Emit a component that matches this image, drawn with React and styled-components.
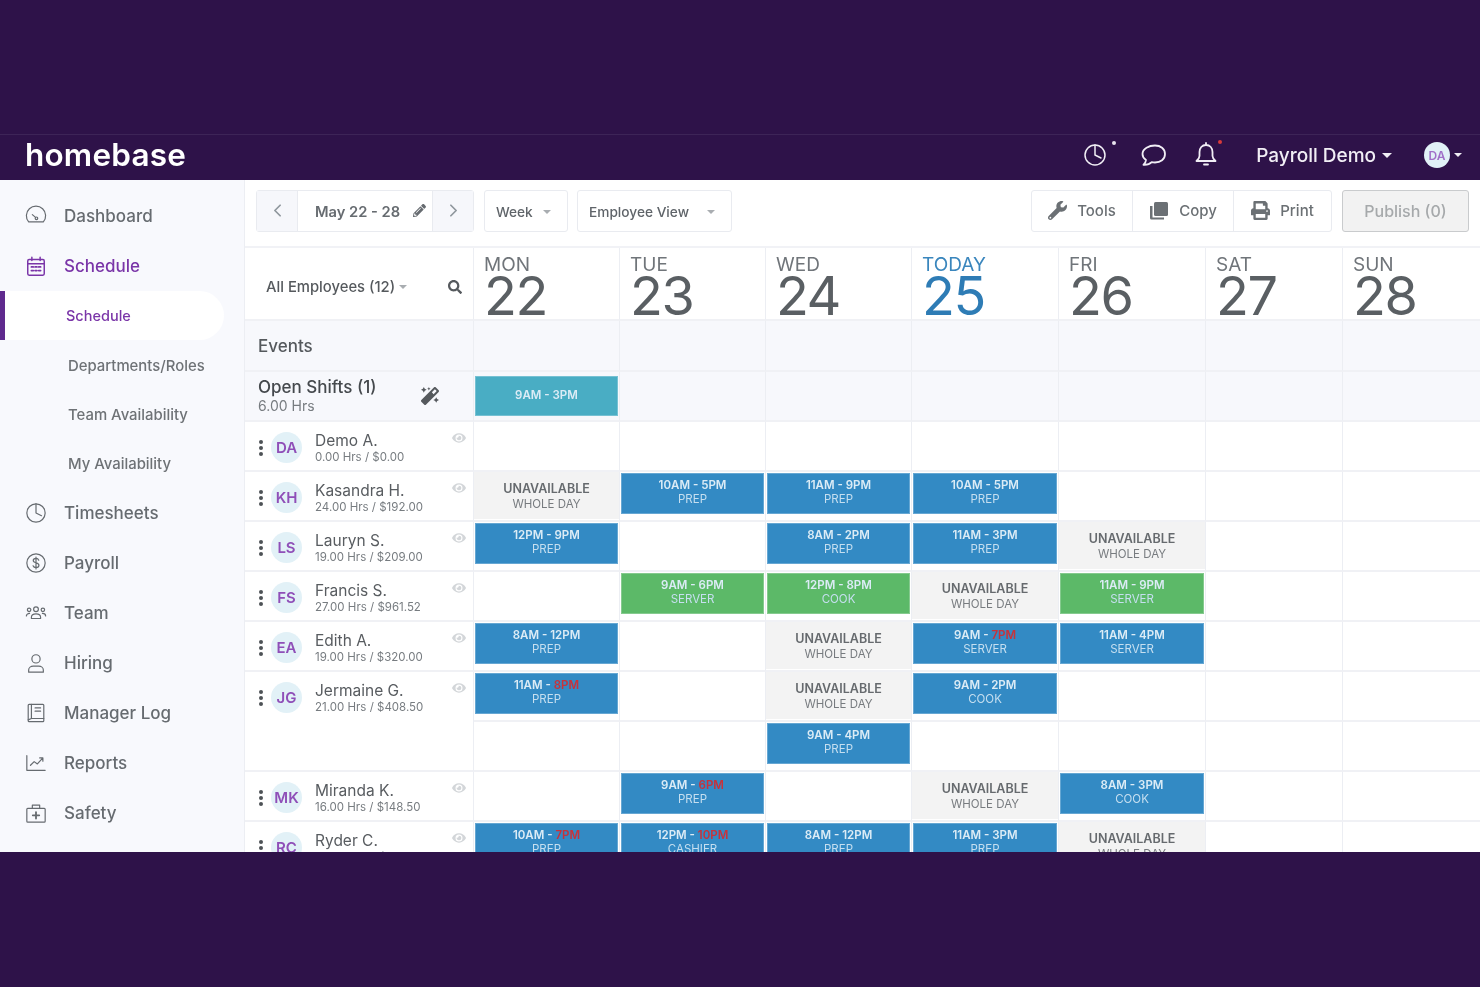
import React from "react";
import styled, { createGlobalStyle } from "styled-components";
import { FaWrench, FaPencilAlt, FaSearch, FaPrint, FaMagic, FaEye } from "react-icons/fa";
import { FiChevronLeft, FiChevronRight } from "react-icons/fi";

const GlobalStyle = createGlobalStyle`
  html, body { margin: 0; padding: 0; background: #2e1249; }
  * { box-sizing: border-box; }
  body { font-family: Inter, "Noto Sans", "Liberation Sans", sans-serif; color: #4d5256; }
`;

const COLUMNS = "229px 146px 146px 146px 147px 147px 137px 138px";

const Page = styled.div`
  width: 1480px;
  height: 987px;
  padding-top: 134px;
  background: #2e1249;
  overflow: hidden;
`;

const Frame = styled.div`
  height: 718px;
  display: flex;
  flex-direction: column;
  background: #fff;
  overflow: hidden;
  filter: blur(0.35px);
`;

const Header = styled.header`
  height: 46px;
  flex: none;
  display: flex;
  align-items: center;
  padding: 0 0 5px 25px;
  background: #2e1249;
  border-top: 1px solid #3d2457;
  color: #fff;
`;

const Logo = styled.div`
  flex: 1;
  font-size: 31.5px;
  font-weight: 600;
  letter-spacing: 0.2px;
  line-height: 40px;
`;

const HeaderIcon = styled.div`
  position: relative;
  display: flex;
  color: #f1eef5;
  margin-right: ${({ $gap }) => $gap}px;
`;

const Dot = styled.span`
  position: absolute;
  top: -2px;
  right: ${({ $right }) => $right}px;
  width: 4px;
  height: 4px;
  border-radius: 50%;
  background: ${({ $color }) => $color};
`;

const HeaderUser = styled.div`
  display: flex;
  align-items: center;
  font-size: 19px;
  font-weight: 500;
  color: #f1eef5;
  margin-right: 32px;
`;

const Caret = styled.span`
  display: inline-block;
  width: 0;
  height: 0;
  margin-left: ${({ $left }) => $left ?? 6}px;
  border-left: ${({ $size }) => $size ?? 4}px solid transparent;
  border-right: ${({ $size }) => $size ?? 4}px solid transparent;
  border-top: ${({ $size }) => $size ?? 4}px solid ${({ $color }) => $color ?? "currentColor"};
`;

const HeaderAvatar = styled.div`
  width: 26px;
  height: 26px;
  border-radius: 50%;
  display: flex;
  align-items: center;
  justify-content: center;
  background: #e1f1f7;
  color: #a070c8;
  font-size: 12px;
  font-weight: 600;
`;

const HeaderEnd = styled.div`
  display: flex;
  align-items: center;
  margin-right: 18px;
  color: #f1eef5;
`;

const Body = styled.div`
  flex: 1;
  display: flex;
  min-height: 0;
`;

const Sidebar = styled.nav`
  width: 245px;
  flex: none;
  background: #f8f9fd;
  border-right: 1px solid #eceef3;
  padding-top: 11px;
`;

const NavItem = styled.div`
  height: 50px;
  display: flex;
  align-items: center;
  gap: 17px;
  padding-left: 25px;
  font-size: 17px;
  font-weight: 500;
  color: ${({ $active }) => ($active ? "#7a35a8" : "#666b70")};
  svg { flex: none; }
`;

const SubItem = styled.div`
  height: 49.25px;
  display: flex;
  align-items: center;
  width: 224px;
  padding-left: ${({ $active }) => ($active ? 61 : 68)}px;
  padding-top: ${({ $active }) => ($active ? 0 : 2)}px;
  font-size: ${({ $active }) => ($active ? 14.5 : 14.9)}px;
  font-weight: 500;
  color: ${({ $active }) => ($active ? "#7a35a8" : "#6e7276")};
  ${({ $active }) =>
    $active &&
    `background: #fff;
     border-left: 5px solid #5f2a8e;
     border-radius: 0 25px 25px 0;`}
`;

const Main = styled.main`
  flex: 1;
  min-width: 0;
  display: flex;
  flex-direction: column;
  overflow: hidden;
`;

const Toolbar = styled.div`
  height: 68px;
  flex: none;
  display: flex;
  align-items: center;
  padding: 0 11px 5px 11px;
  border-bottom: 2px solid #f1f2f6;
  font-size: 14px;
  font-weight: 500;
  color: #6b7074;
`;

const Group = styled.div`
  display: flex;
  height: 42px;
  border: 1px solid #e9ebf0;
  border-radius: 3px;
  background: #fff;
  margin-right: ${({ $gap }) => $gap ?? 0}px;
`;

const ArrowButton = styled.div`
  width: 41px;
  display: flex;
  align-items: center;
  justify-content: center;
  background: #f6f7fb;
  color: #8f979d;
  ${({ $end }) => ($end ? "border-left: 1px solid #e9ebf0;" : "border-right: 1px solid #e9ebf0;")}
`;

const DateLabel = styled.div`
  width: 134px;
  display: flex;
  align-items: center;
  padding: 2px 0 0 17px;
  font-size: 14.7px;
  font-weight: 600;
  gap: 13px;
  color: #666b70;
  svg { color: #666b70; margin-top: -3px; }
`;

const Select = styled.div`
  display: flex;
  align-items: center;
  width: ${({ $width }) => $width}px;
  padding: 2px 16px 0 11px;
  font-size: 13.7px;
  color: #5f6469;
  justify-content: space-between;
`;

const Spacer = styled.div`
  flex: 1;
`;

const ToolButton = styled.div`
  width: ${({ $width }) => $width}px;
  display: flex;
  align-items: center;
  justify-content: center;
  gap: 10px;
  font-size: 15px;
  color: #6b7074;
  & + & { border-left: 1px solid #e9ebf0; }
`;

const PublishButton = styled.div`
  width: 127px;
  height: 42px;
  display: flex;
  align-items: center;
  justify-content: center;
  background: #f2f2f2;
  border: 1px solid #c9cbcd;
  border-radius: 3px;
  color: #a6a9ab;
  font-size: 16px;
`;

const Row = styled.div`
  display: grid;
  grid-template-columns: ${COLUMNS};
  grid-auto-rows: ${({ $height }) => $height ?? 50}px;
  flex: none;
  background: ${({ $tint }) => ($tint ? "#f7f8fc" : "#fff")};
`;

const Cell = styled.div`
  border-right: 1px solid #eceef3;
  border-bottom: 2px solid #f0f1f5;
  padding: ${({ $inset }) => $inset ?? 1}px 1px 0;
  min-width: 0;
`;

const DayCell = styled(Cell)`
  padding: 7px 0 0 10px;
  position: relative;
  color: ${({ $today }) => ($today ? "#2e7cb5" : "#5a5f63")};
`;

const DayName = styled.div`
  font-size: 19px;
  line-height: 20px;
  color: ${({ $today }) => ($today ? "#3a86bd" : "#70757a")};
`;

const DayNumber = styled.div`
  font-size: 54px;
  line-height: 42px;
  letter-spacing: -1.5px;
`;

const FilterCell = styled(Cell)`
  display: flex;
  align-items: center;
  padding: 6px 11px 0 21px;
  font-size: 14.8px;
  font-weight: 500;
  color: #55595d;
  svg { color: #55595d; }
`;

const SectionCell = styled(Cell)`
  display: flex;
  align-items: center;
  padding: 0 13px;
  font-size: 17px;
  font-weight: 500;
  color: #55595d;
`;

const OpenCell = styled(Cell)`
  display: flex;
  align-items: center;
  justify-content: space-between;
  padding: 0 34px 1px 13px;
  svg { color: #55595d; }
`;

const OpenTitle = styled.div`
  font-size: 17px;
  line-height: 19px;
  font-weight: 500;
  color: #45494d;
`;

const OpenHours = styled.div`
  font-size: 14px;
  line-height: 17px;
  color: #777c80;
`;

const StaffCell = styled(Cell)`
  grid-row: span ${({ $span }) => $span ?? 1};
  position: relative;
  display: flex;
  align-items: flex-start;
  padding: 9px 0 0 14px;
`;

const Kebab = styled.div`
  display: flex;
  flex-direction: column;
  gap: 2px;
  margin: 9px 8px 0 0;
  span {
    width: 4px;
    height: 4px;
    border-radius: 50%;
    background: #4d5256;
  }
`;

const Avatar = styled.div`
  width: 31px;
  height: 31px;
  flex: none;
  margin: 1px 13px 0 0;
  border-radius: 50%;
  display: flex;
  align-items: center;
  justify-content: center;
  background: #e2f1f7;
  color: #8f4fb8;
  font-size: 15px;
  font-weight: 600;
`;

const StaffName = styled.div`
  font-size: 15.5px;
  line-height: 20px;
  color: #585c60;
`;

const StaffHours = styled.div`
  font-size: 11.5px;
  line-height: 15px;
  margin-top: -1px;
  color: #777c80;
`;

const EyeMark = styled.div`
  position: absolute;
  top: 9px;
  right: 7px;
  display: flex;
  color: #d3d6d9;
`;

const Shift = styled.div`
  height: ${({ $short }) => ($short ? 40 : 41)}px;
  display: flex;
  flex-direction: column;
  align-items: center;
  justify-content: center;
  background: ${({ $tone }) => ({ blue: "#338ac4", green: "#5cb968", teal: "#49adc4" })[$tone]};
  border: 1px solid rgba(255, 255, 255, 0.25);
  color: #fff;
  padding-bottom: ${({ $short }) => ($short ? 2 : 4)}px;
`;

const ShiftTime = styled.div`
  font-size: 11.5px;
  line-height: 15px;
  font-weight: 600;
  color: #dcecf6;
  b { color: #c8323a; font-weight: 600; }
`;

const ShiftRole = styled.div`
  font-size: 11.5px;
  line-height: 13px;
  color: #c6dff0;
`;

const Unavailable = styled.div`
  height: 47px;
  display: flex;
  flex-direction: column;
  align-items: center;
  justify-content: center;
  background: #f3f3f3;
  margin: -1px -1px 0;
`;

const UnavailableTitle = styled.div`
  font-size: 12.5px;
  line-height: 16px;
  font-weight: 600;
  color: #666a6e;
`;

const UnavailableSub = styled.div`
  font-size: 11.5px;
  line-height: 14px;
  color: #777b7f;
`;

const stroke = { fill: "none", stroke: "currentColor", strokeWidth: 1.3, strokeLinecap: "round", strokeLinejoin: "round" };

const navIcons = {
  gauge: (
    <g {...stroke}>
      <path d="M4 18.5a10.5 10.5 0 1 1 16 0z" />
      <circle cx="12.5" cy="14.5" r="1.4" />
      <path d="M11.5 13.5 8 10.5" />
    </g>
  ),
  calendar: (
    <g {...stroke} strokeWidth="1.6">
      <rect x="3" y="5" width="18" height="17" rx="1.5" />
      <path d="M3 9.5h18M7.5 2.5V6M16.5 2.5V6" />
      <path strokeWidth="2" d="M7 13h2M11 13h2M15 13h2M7 17h2M11 17h2M15 17h2" />
    </g>
  ),
  clock: (
    <g {...stroke}>
      <circle cx="12" cy="12" r="10" />
      <path d="M12 2v10l6 3" />
    </g>
  ),
  dollar: (
    <g {...stroke}>
      <circle cx="12" cy="12" r="10" />
      <path d="M15 9c-.5-1.3-1.6-2-3-2-1.7 0-3 .9-3 2.4 0 3.2 6.2 1.8 6.2 5 0 1.5-1.4 2.6-3.2 2.6-1.5 0-2.7-.7-3.2-2M12 5.5v13" />
    </g>
  ),
  team: (
    <g {...stroke}>
      <circle cx="12" cy="8" r="2.6" />
      <circle cx="4.5" cy="8.5" r="1.9" />
      <circle cx="19.5" cy="8.5" r="1.9" />
      <path d="M7 18v-1.500c0-2 2-3.500 5-3.500s5 1.500 5 3.500V18zM5 12.500c-2 0-3.500 1-3.500 2.800M19 12.500c2 0 3.500 1 3.500 2.800" />
    </g>
  ),
  person: (
    <g {...stroke}>
      <circle cx="12" cy="7.5" r="4.5" />
      <path d="M4 22v-2.500C4 17 6.500 15.500 9 15.500h6c2.500 0 5 1.500 5 4V22z" />
    </g>
  ),
  book: (
    <g {...stroke}>
      <rect x="3.5" y="2.5" width="17" height="19" rx="1" />
      <path d="M7 2.500v15.500h13.500M3.500 19.500 7 18M11 6.500h6M11 10h6" />
    </g>
  ),
  chart: (
    <g {...stroke}>
      <path d="M2 4v16h20M6 14.500l4-4 3.500 2.500 5.500-6M16 6.500h3.500V10" />
    </g>
  ),
  kit: (
    <g {...stroke}>
      <rect x="2" y="7" width="20" height="15" rx="1" />
      <path d="M8 7V3.500h8V7" />
      <path strokeWidth="2" d="M12 11v7M8.500 14.500h7" />
    </g>
  ),
};

function NavIcon({ name }) {
  return (
    <svg width="22" height="22" viewBox="0 0 24 24" aria-hidden="true">
      {navIcons[name]}
    </svg>
  );
}

const days = [
  { name: "MON", num: 22 },
  { name: "TUE", num: 23 },
  { name: "WED", num: 24 },
  { name: "TODAY", num: 25, today: true },
  { name: "FRI", num: 26 },
  { name: "SAT", num: 27 },
  { name: "SUN", num: 28 },
];

const U = { off: true };
const s = (time, role, tone = "blue", late) => ({ time, role, tone, late });
const none = null;

const staff = [
  { initials: "DA", name: "Demo A.", hours: "0.00 Hrs / $0.00", rows: [[none, none, none, none, none, none, none]] },
  {
    initials: "KH",
    name: "Kasandra H.",
    hours: "24.00 Hrs / $192.00",
    rows: [[U, s("10AM - 5PM", "PREP"), s("11AM - 9PM", "PREP"), s("10AM - 5PM", "PREP"), none, none, none]],
  },
  {
    initials: "LS",
    name: "Lauryn S.",
    hours: "19.00 Hrs / $209.00",
    rows: [[s("12PM - 9PM", "PREP"), none, s("8AM - 2PM", "PREP"), s("11AM - 3PM", "PREP"), U, none, none]],
  },
  {
    initials: "FS",
    name: "Francis S.",
    hours: "27.00 Hrs / $961.52",
    rows: [[none, s("9AM - 6PM", "SERVER", "green"), s("12PM - 8PM", "COOK", "green"), U, s("11AM - 9PM", "SERVER", "green"), none, none]],
  },
  {
    initials: "EA",
    name: "Edith A.",
    hours: "19.00 Hrs / $320.00",
    rows: [[s("8AM - 12PM", "PREP"), none, U, s("9AM - ", "SERVER", "blue", "7PM"), s("11AM - 4PM", "SERVER"), none, none]],
  },
  {
    initials: "JG",
    name: "Jermaine G.",
    hours: "21.00 Hrs / $408.50",
    rows: [
      [s("11AM - ", "PREP", "blue", "8PM"), none, U, s("9AM - 2PM", "COOK"), none, none, none],
      [none, none, s("9AM - 4PM", "PREP"), none, none, none, none],
    ],
  },
  {
    initials: "MK",
    name: "Miranda K.",
    hours: "16.00 Hrs / $148.50",
    rows: [[none, s("9AM - ", "PREP", "blue", "6PM"), none, U, s("8AM - 3PM", "COOK"), none, none]],
  },
  {
    initials: "RC",
    name: "Ryder C.",
    hours: "24.00 Hrs / $210.00",
    rows: [[s("10AM - ", "PREP", "blue", "7PM"), s("12PM - ", "CASHIER", "blue", "10PM"), s("8AM - 12PM", "PREP"), s("11AM - 3PM", "PREP"), U, none, none]],
  },
];

function Slot({ value }) {
  if (!value) return <Cell />;
  if (value.off) {
    return (
      <Cell>
        <Unavailable>
          <UnavailableTitle>UNAVAILABLE</UnavailableTitle>
          <UnavailableSub>WHOLE DAY</UnavailableSub>
        </Unavailable>
      </Cell>
    );
  }
  return (
    <Cell>
      <Shift $tone={value.tone}>
        <ShiftTime>
          {value.time}
          {value.late && <b>{value.late}</b>}
        </ShiftTime>
        <ShiftRole>{value.role}</ShiftRole>
      </Shift>
    </Cell>
  );
}

function StaffRow({ person }) {
  return (
    <Row>
      <StaffCell $span={person.rows.length}>
        <Kebab>
          <span />
          <span />
          <span />
        </Kebab>
        <Avatar>{person.initials}</Avatar>
        <div>
          <StaffName>{person.name}</StaffName>
          <StaffHours>{person.hours}</StaffHours>
        </div>
        <EyeMark>
          <FaEye size={14} />
        </EyeMark>
      </StaffCell>
      {person.rows.flat().map((value, i) => (
        <Slot key={i} value={value} />
      ))}
    </Row>
  );
}

export default function App() {
  return (
    <Page>
      <GlobalStyle />
      <Frame>
        <Header>
          <Logo>homebase</Logo>
          <HeaderIcon $gap={33}>
            <svg width="24" height="24" viewBox="0 0 24 24" {...stroke} strokeWidth="1.5">
              <circle cx="12" cy="12" r="10" />
              <path d="M12 2v10l6 3" />
            </svg>
            <Dot $color="#e8e4ee" $right={-9} />
          </HeaderIcon>
          <HeaderIcon $gap={27}>
            <svg width="27" height="24" viewBox="0 0 27 24" {...stroke} strokeWidth="1.8">
              <path d="M15 2.500c5.500 0 10 3 10 8.500s-4.500 8.500-10 8.500c-1.200 0-2.300-.1-3.300-.4C10 21 7 22 3.500 21.800c1.500-1.200 2.300-2.800 2.500-4.800C3.700 15.500 2.500 13.500 2.500 11 2.500 5.500 9 2.500 15 2.500z" />
            </svg>
          </HeaderIcon>
          <HeaderIcon $gap={38}>
            <svg width="24" height="26" viewBox="0 0 24 26" {...stroke} strokeWidth="1.8">
              <path d="M12 3c4 0 6.500 3 6.500 7v4c0 2 1.500 3.500 3 5H2.500c1.500-1.500 3-3 3-5v-4C5.500 6 8 3 12 3zM12 1v2M10 22.500h4" />
            </svg>
            <Dot $color="#d83a3a" $right={-4} />
          </HeaderIcon>
          <HeaderUser>
            Payroll Demo
            <Caret $left={6} $size={5} />
          </HeaderUser>
          <HeaderEnd>
            <HeaderAvatar>DA</HeaderAvatar>
            <Caret $left={4} />
          </HeaderEnd>
        </Header>
        <Body>
          <Sidebar>
            <NavItem>
              <NavIcon name="gauge" />
              Dashboard
            </NavItem>
            <NavItem $active>
              <NavIcon name="calendar" />
              Schedule
            </NavItem>
            <SubItem $active>Schedule</SubItem>
            <SubItem>Departments/Roles</SubItem>
            <SubItem>Team Availability</SubItem>
            <SubItem>My Availability</SubItem>
            <NavItem>
              <NavIcon name="clock" />
              Timesheets
            </NavItem>
            <NavItem>
              <NavIcon name="dollar" />
              Payroll
            </NavItem>
            <NavItem>
              <NavIcon name="team" />
              Team
            </NavItem>
            <NavItem>
              <NavIcon name="person" />
              Hiring
            </NavItem>
            <NavItem>
              <NavIcon name="book" />
              Manager Log
            </NavItem>
            <NavItem>
              <NavIcon name="chart" />
              Reports
            </NavItem>
            <NavItem>
              <NavIcon name="kit" />
              Safety
            </NavItem>
          </Sidebar>
          <Main>
            <Toolbar>
              <Group $gap={10}>
                <ArrowButton>
                  <FiChevronLeft size={21} />
                </ArrowButton>
                <DateLabel>
                  May 22 - 28
                  <FaPencilAlt size={13} />
                </DateLabel>
                <ArrowButton $end>
                  <FiChevronRight size={21} />
                </ArrowButton>
              </Group>
              <Group $gap={9}>
                <Select $width={82}>
                  Week
                  <Caret $color="#a9adb1" />
                </Select>
              </Group>
              <Group>
                <Select $width={153}>
                  Employee View
                  <Caret $color="#a9adb1" />
                </Select>
              </Group>
              <Spacer />
              <Group $gap={10}>
                <ToolButton $width={100}>
                  <FaWrench size={19} />
                  Tools
                </ToolButton>
                <ToolButton $width={101}>
                  <svg width="20" height="20" viewBox="0 0 20 20" fill="currentColor">
                    <rect x="5" y="1" width="14" height="14" rx="1.5" />
                    <path d="M3.500 5v11.500H15v2H2.500A1.500 1.500 0 0 1 1 17V5z" />
                  </svg>
                  Copy
                </ToolButton>
                <ToolButton $width={98}>
                  <FaPrint size={19} />
                  Print
                </ToolButton>
              </Group>
              <PublishButton>Publish (0)</PublishButton>
            </Toolbar>
            <Row $height={73}>
              <FilterCell>
                All Employees (12)
                <Caret $left={4} $size={4} $color="#a9adb1" />
                <Spacer />
                <FaSearch size={14} />
              </FilterCell>
              {days.map((day) => (
                <DayCell key={day.num} $today={day.today}>
                  <DayName $today={day.today}>{day.name}</DayName>
                  <DayNumber>{day.num}</DayNumber>
                </DayCell>
              ))}
            </Row>
            <Row $tint $height={51}>
              <SectionCell>Events</SectionCell>
              {days.map((day) => (
                <Cell key={day.num} />
              ))}
            </Row>
            <Row $tint>
              <OpenCell>
                <div>
                  <OpenTitle>Open Shifts (1)</OpenTitle>
                  <OpenHours>6.00 Hrs</OpenHours>
                </div>
                <FaMagic size={18} />
              </OpenCell>
              <Cell $inset={4}>
                <Shift $tone="teal" $short>
                  <ShiftTime>9AM - 3PM</ShiftTime>
                </Shift>
              </Cell>
              {days.slice(1).map((day) => (
                <Cell key={day.num} />
              ))}
            </Row>
            {staff.map((person) => (
              <StaffRow key={person.initials} person={person} />
            ))}
          </Main>
        </Body>
      </Frame>
    </Page>
  );
}
